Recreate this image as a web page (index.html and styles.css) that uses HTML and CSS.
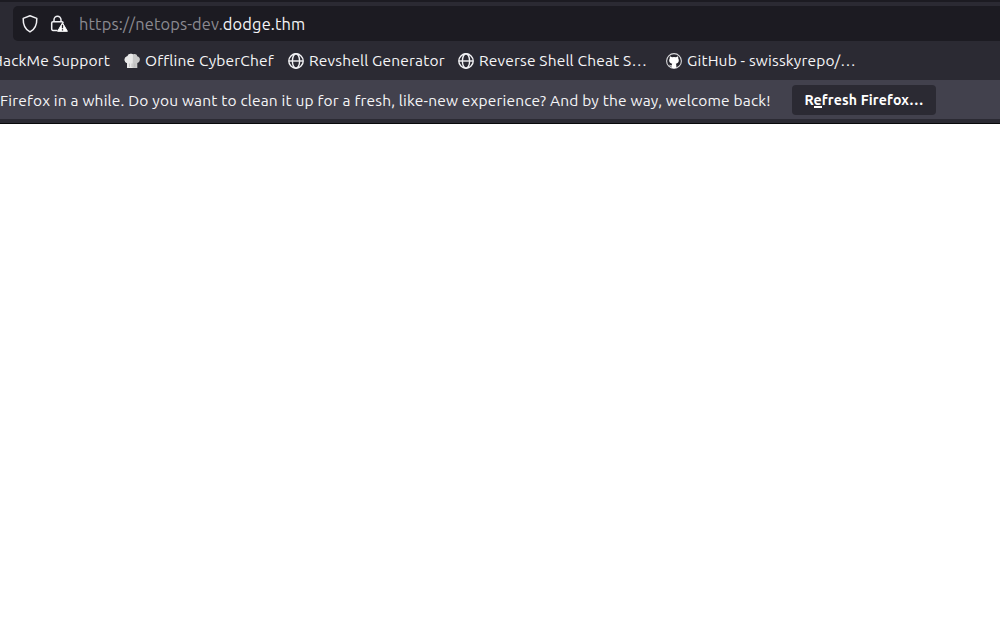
FILE: index.html
```
<!DOCTYPE html>
<html lang="en">
<head>
<meta charset="utf-8">
<title>netops-dev.dodge.thm</title>
<link rel="stylesheet" href="styles.css">
</head>
<body>
<header class="browser">
  <div class="toolbar">
    <div class="urlbar">
      <svg class="shield" viewBox="0 0 18 20"><path d="M9 1.8 15.8 4.4C16 10.5 14.2 15.2 9 17.9 3.8 15.2 2 10.5 2.2 4.4Z" fill="none" stroke="#f0f0f3" stroke-width="1.5" stroke-linejoin="round"/></svg>
      <svg class="lock" viewBox="0 0 18 20"><path d="M4 8V5.7a3.5 3.5 0 0 1 7 0V8M13 9V8.8a1 1 0 0 0-1-1H3a1.3 1.3 0 0 0-1.3 1.3v6A1.3 1.3 0 0 0 3 16.4h4.5" fill="none" stroke="#f0f0f3" stroke-width="1.5"/><path d="M12.5 8.8 17.4 17.3H7.6Z" fill="#fff" stroke="#fff" stroke-linejoin="round"/><path d="M12.5 10.8v3.4M12.5 15.2v1.3" stroke="#1c1b22" stroke-width="1.3"/></svg>
      <span class="url"><span class="dim">https://netops-dev.</span>dodge.thm</span>
    </div>
  </div>
  <nav class="bookmarks">
    <a class="bookmark first"><span>HackMe Support</span></a>
    <a class="bookmark chef">
      <svg class="icon" viewBox="0 0 16 16"><path d="M3 15V10C-.5 9 0 3.5 3.5 3.2 4.5.2 8 .2 9 1.5c2-1 4 0 4.2 1.8C17 4 16.5 9 13.3 10v5Z" fill="#c9c9c9"/><path d="M3.5 3.2C4.5.2 8 .2 9 1.5L8.5 15H3V10C-.5 9 0 3.5 3.5 3.2Z" fill="#e8e8e8"/><path d="M5.5 10.5V14M8 10.5V14M10.8 10.5V14" stroke="#b5b5b5" stroke-width=".7"/></svg>
      <span>Offline CyberChef</span>
    </a>
    <a class="bookmark rev">
      <svg class="icon" viewBox="0 0 16 16"><g fill="none" stroke="#f2f2f5" stroke-width="1.4"><circle cx="8" cy="8" r="7.2"/><ellipse cx="8" cy="8" rx="3.6" ry="7.2"/><path d="M1 8h14"/></g></svg>
      <span>Revshell Generator</span>
    </a>
    <a class="bookmark cheat">
      <svg class="icon" viewBox="0 0 16 16"><g fill="none" stroke="#f2f2f5" stroke-width="1.4"><circle cx="8" cy="8" r="7.2"/><ellipse cx="8" cy="8" rx="3.6" ry="7.2"/><path d="M1 8h14"/></g></svg>
      <span>Reverse Shell Cheat S…</span>
    </a>
    <a class="bookmark github">
      <svg class="icon" viewBox="0 0 16 16"><circle cx="8" cy="8" r="7.4" fill="#25242c" stroke="#d9d9dc" stroke-width="1.1"/><path d="M4 3.3 6 4.2Q8 3.8 10 4.2L12 3.3Q12.4 4.4 12.2 5.3C13.6 7.7 12.5 10.4 9.8 10.8 10.3 11.3 10.4 12 10.4 15H5.7V13.4C4 13.7 3.6 12.2 2.9 11.7 4.3 11.5 4.6 13 5.8 12.3Q5.8 11.2 6.3 10.8C3.5 10.4 2.4 7.7 3.8 5.3Q3.5 4.3 4 3.3Z" fill="#fff"/></svg>
      <span>GitHub - swisskyrepo/…</span>
    </a>
  </nav>
  <div class="notice">
    <span class="message">Firefox in a while. Do you want to clean it up for a fresh, like-new experience? And by the way, welcome back!</span>
    <button class="refresh"><span>R<span class="key">e</span>fresh Firefox…</span></button>
  </div>
</header>
<main class="page"></main>
</body>
</html>
```
FILE: styles.css
```
* { box-sizing: border-box; }
body { margin: 0; height: 630px; overflow: hidden; background: #fff; color: #f5f5f7; font-family: Ubuntu, "Noto Sans", sans-serif; font-size: 15.5px; letter-spacing: 0.17px; }
.browser { height: 124px; background: #2b2a33; border-top: 2px solid #1c1b22; border-bottom: 1px solid #09090b; overflow: hidden; white-space: nowrap; }
.toolbar { height: 39px; padding: 4px 0 0 13px; }
.urlbar { display: flex; align-items: center; height: 35px; padding-left: 8px; background: #1c1b22; border-radius: 5px 0 0 5px; }
.shield, .lock { width: 18px; height: 20px; flex: none; }
.lock { margin-left: 11px; }
.url { margin-left: 11px; font-size: 16.4px; letter-spacing: 0.15px; }
.dim { color: #8b8a91; }
.bookmarks { display: grid; grid-template-columns: 110px 150px 156px 189px 200px; column-gap: 14px; height: 39px; align-items: center; }
.bookmark { display: flex; align-items: center; }
.first { justify-content: flex-end; }
.icon { width: 16px; height: 16px; margin-right: 5px; flex: none; }
.github { margin-left: 5px; }
.notice { display: flex; align-items: center; height: 39px; background: #42414d; }
.message { width: 792px; flex: none; padding-top: 1px; }
.refresh { width: 144px; height: 30px; padding: 0; border: 0; border-radius: 4px; background: #2b2a33; color: #fff; font: bold 14.1px Ubuntu, "Noto Sans", sans-serif; letter-spacing: 0.17px; }
.key { background: linear-gradient(#fff, #fff) left 0 bottom 0 / 100% 2px no-repeat; }
```
